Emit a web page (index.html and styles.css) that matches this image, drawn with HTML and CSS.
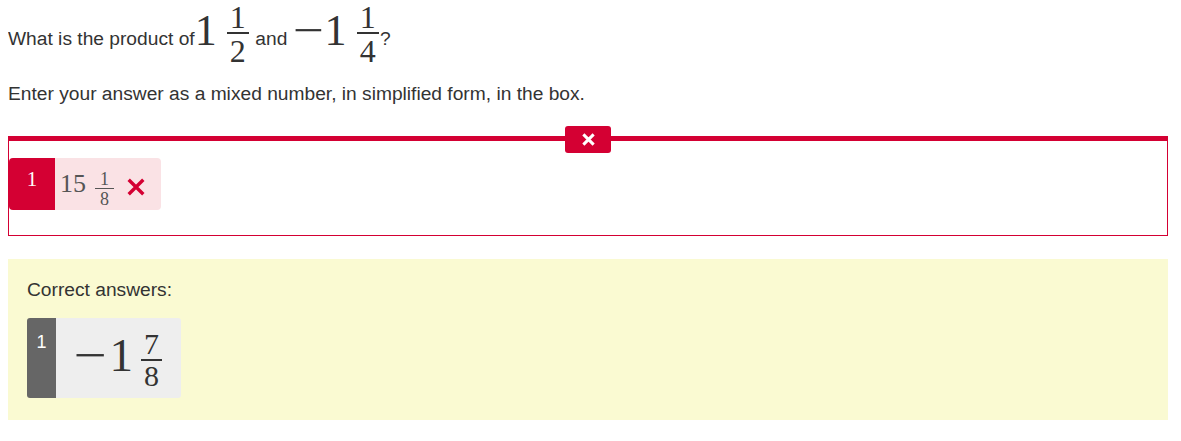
FILE: index.html
```html
<html>
<head>
<link rel="stylesheet" href="styles.css">
<title>Question - product of mixed numbers</title>
</head>
<body>
<div class="page">
    <p class="question">What is the product of<span class="math qmath"><span class="whole">1</span><span class="frac"><span class="num">1</span><span class="den">2</span></span></span> and <span class="math qmath"><span class="minus">&minus;</span><span class="whole">1</span><span class="frac"><span class="num">1</span><span class="den">4</span></span></span>?</p>
    <p class="prompt">Enter your answer as a mixed number, in simplified form, in the box.</p>

    <div class="response incorrect">
        <span class="badge">
            <svg width="15" height="15" viewBox="0 0 16 16"><path d="M2.5 2.5L13.5 13.5M13.5 2.5L2.5 13.5" stroke="currentColor" stroke-width="3.2" fill="none"/></svg>
        </span>
        <div class="chip">
            <span class="chip-label">1</span>
            <span class="chip-value">
                <span class="math smath"><span class="whole">15</span><span class="frac"><span class="num">1</span><span class="den">8</span></span></span>
                <svg class="wrong" width="18" height="18" viewBox="0 0 16 16"><path d="M1.5 1.5L14.5 14.5M14.5 1.5L1.5 14.5" stroke="currentColor" stroke-width="3" fill="none"/></svg>
            </span>
        </div>
    </div>

    <div class="correct">
        <p class="correct-title">Correct answers:</p>
        <div class="answer">
            <span class="answer-label">1</span>
            <span class="answer-value"><span class="math amath"><span class="minus">&minus;</span><span class="whole">1</span><span class="frac"><span class="num">7</span><span class="den">8</span></span></span></span>
        </div>
    </div>
</div>
</body>
</html>
```

FILE: styles.css
```css
body {margin: 0 8px;
      font-family: "Liberation Sans", Arial, sans-serif;
      font-size: 19.2px;
      color: #333}
.page {width: 1160px}

.question {margin: 5px 0 0 0}
.prompt {margin: 20px 0 0 0}

/* math pieces */
.math {font-family: "Liberation Serif", "Times New Roman", serif}
.frac {display: inline-flex;
       flex-direction: column;
       text-align: center}
.num, .den {line-height: 0.75; padding: 0 0.1em}
.num {padding-bottom: 0.1em}
.den {border-top: 2px solid currentColor; padding-top: 0.15em}
.minus {display: inline-block; transform: scaleX(1.25)}

.qmath {font-size: 44px}
.qmath .frac {font-size: 32px; vertical-align: 17px; margin: 0 1px 0 10px}
.qmath .minus {margin: 0 4px 0 3px}

/* the response box */
.response {position: relative;
           margin-top: 31px;
           border: 1px solid #d40033;
           border-top-width: 5px;
           padding: 17px 0 25px 0}
.badge {position: absolute;
        top: -15px;
        left: 50%;
        transform: translateX(-50%);
        width: 46px;
        height: 27px;
        border-radius: 3px;
        background-color: #d40033;
        color: white;
        display: flex;
        align-items: center;
        justify-content: center}
.chip {display: inline-flex;
       height: 52px;
       vertical-align: top}
.chip-label {width: 46px;
             padding-top: 10px;
             box-sizing: border-box;
             text-align: center;
             font-family: "Liberation Serif", serif;
             font-size: 21px;
             line-height: 22px;
             color: white;
             background-color: #d40033;
             border-radius: 4px 0 0 4px}
.chip-value {display: flex;
             align-items: flex-start;
             gap: 13px;
             padding: 0 16px 0 5px;
             background-color: #fae2e5;
             border-radius: 0 4px 4px 0;
             color: #555}
.smath {font-size: 26px; line-height: 1; margin-top: 12px}
.smath .frac {font-size: 18px; vertical-align: 7px; margin-left: 9px}
.smath .num, .smath .den {line-height: 1; padding: 0 5px}
.smath .num {padding-bottom: 0}
.smath .den {border-top-width: 1px; padding-top: 1px}
.wrong {color: #d40033; margin-top: 20px}

/* correct answers */
.correct {margin-top: 23px;
          padding: 20px 19px 22px 19px;
          background-color: #fafad2}
.correct-title {margin: 0 0 17px 0}
.answer {display: inline-flex;
         height: 80px;
         vertical-align: top}
.answer-label {width: 29px;
               padding-top: 14px;
               box-sizing: border-box;
               text-align: center;
               font-size: 18px;
               color: white;
               background-color: #666;
               border-radius: 3px 0 0 3px}
.answer-value {display: flex;
               align-items: center;
               padding: 0 19px 0 18px;
               background-color: #eeeeee;
               border-radius: 0 3px 3px 0}
.amath {font-size: 47px; line-height: 1; margin-top: 4px}
.amath .frac {font-size: 30px; vertical-align: 17px; margin-left: 8px}
.amath .minus {margin: 0 6px 0 3px}
```
